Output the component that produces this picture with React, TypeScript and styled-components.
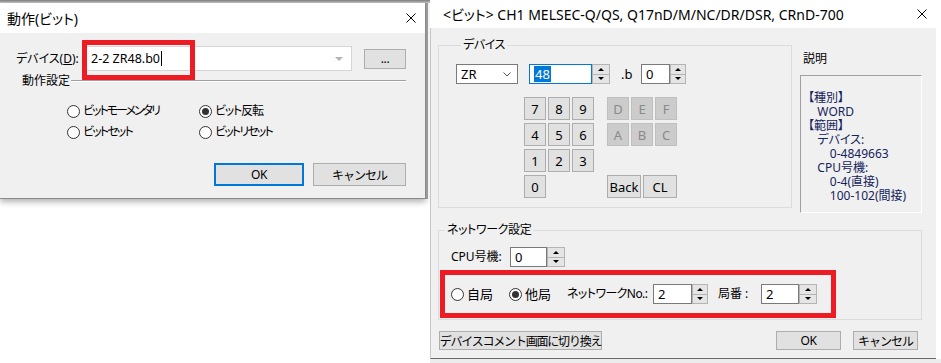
import React from 'react';
import styled, { createGlobalStyle } from 'styled-components';

const GlobalStyle = createGlobalStyle`
  html, body {
    margin: 0;
    padding: 0;
    background: #ffffff;
  }
  body {
    font-family: "Noto Sans", "Noto Sans CJK JP", "Liberation Sans", sans-serif;
    font-size: 12px;
    color: #000;
    font-feature-settings: "palt";
  }
  * {
    box-sizing: border-box;
  }
`;

const Screen = styled.div`
  display: flex;
  width: 941px;
  height: 363px;
  overflow: hidden;
  background: #ffffff;
`;

/* ---------- shared parts ---------- */

const CloseIcon = () => (
  <svg width="10" height="10" viewBox="0 0 10 10">
    <path d="M0.5 0.5L9.5 9.5M9.5 0.5L0.5 9.5" stroke="#000" strokeWidth="1" fill="none" />
  </svg>
);

const TitleBar = styled.div<{ $h: number; $pl: number; $pr: number; $size: number }>`
  height: ${p => p.$h}px;
  background: #ffffff;
  display: flex;
  align-items: center;
  justify-content: space-between;
  padding: 0 ${p => p.$pr}px 0 ${p => p.$pl}px;
  font-size: ${p => p.$size}px;
  white-space: nowrap;
`;

const Text = styled.span<{ $w?: number; $ls?: number; $size?: number }>`
  font-size: ${p => p.$size || 12}px;
  line-height: 14px;
  white-space: nowrap;
  letter-spacing: ${p => p.$ls || 0}px;
  ${p => (p.$w ? `width: ${p.$w}px; flex: none;` : '')}
`;

const PushButton = styled.button<{ $w: number; $h: number; $default?: boolean; $off?: boolean; $ls?: number; $size?: number }>`
  width: ${p => p.$w}px;
  height: ${p => p.$h}px;
  padding: 0;
  margin: 0;
  flex: none;
  font-family: inherit;
  font-size: ${p => p.$size || 12}px;
  letter-spacing: ${p => (p.$ls === undefined ? -0.4 : p.$ls)}px;
  white-space: nowrap;
  color: ${p => (p.$off ? '#8a8a8a' : '#000')};
  background: ${p => (p.$off ? '#cccccc' : '#e1e1e1')};
  border: ${p => (p.$default ? '2px solid #0078d7' : `1px solid ${p.$off ? '#bfbfbf' : '#adadad'}`)};
  display: flex;
  align-items: center;
  justify-content: center;
`;

const RadioItem = styled.div<{ $w?: number }>`
  display: flex;
  align-items: center;
  gap: 3px;
  height: 20px;
  ${p => (p.$w ? `width: ${p.$w}px; flex: none;` : '')}
`;

const RadioCircle = styled.span<{ $on?: boolean }>`
  width: 13px;
  height: 13px;
  border-radius: 50%;
  border: 1px solid #333;
  background: #fff;
  display: flex;
  align-items: center;
  justify-content: center;
  flex: none;
  &::after {
    content: '';
    width: 7px;
    height: 7px;
    border-radius: 50%;
    background: #333;
    display: ${p => (p.$on ? 'block' : 'none')};
  }
`;

const Radio = ({ label, on, w, size, ls }: { label: string; on?: boolean; w?: number; size?: number; ls?: number }) => (
  <RadioItem $w={w}>
    <RadioCircle $on={on} />
    <Text $size={size} $ls={ls}>{label}</Text>
  </RadioItem>
);

const SpinWrap = styled.div`
  display: flex;
  height: 20px;
  flex: none;
`;

const SpinField = styled.div<{ $w: number; $focus?: boolean }>`
  width: ${p => p.$w}px;
  height: 20px;
  background: #fff;
  border: 1px solid ${p => (p.$focus ? '#0078d7' : '#7a7a7a')};
  display: flex;
  align-items: center;
  padding-left: 4px;
  font-size: 13px;
`;

const Selected = styled.span`
  background: #0078d7;
  color: #fff;
  line-height: 16px;
  padding: 0 1px;
`;

const SpinButtons = styled.div<{ $w: number }>`
  width: ${p => p.$w}px;
  display: flex;
  flex-direction: column;
`;

const SpinArrow = styled.div<{ $down?: boolean }>`
  flex: 1;
  background: #e5e5e5;
  border: 1px solid #b4b4b4;
  ${p => (p.$down ? 'border-top: none;' : '')}
  display: flex;
  align-items: center;
  justify-content: center;
  &::after {
    content: '';
    width: 0;
    height: 0;
    border-left: 3px solid transparent;
    border-right: 3px solid transparent;
    ${p => (p.$down ? 'border-top: 3px solid #000;' : 'border-bottom: 3px solid #000;')}
  }
`;

const Spin = ({ value, w, bw, focus }: { value: string; w: number; bw: number; focus?: boolean }) => (
  <SpinWrap>
    <SpinField $w={w} $focus={focus}>
      {focus ? <Selected>{value}</Selected> : value}
    </SpinField>
    <SpinButtons $w={bw}>
      <SpinArrow />
      <SpinArrow $down />
    </SpinButtons>
  </SpinWrap>
);

const Highlight = styled.div`
  border: 5px solid #ed1c24;
`;

/* ---------- left dialog ---------- */

const LeftArea = styled.div`
  width: 430px;
  flex: none;
  display: flex;
  flex-direction: column;
`;

const TopShade = styled.div`
  height: 3px;
  background: linear-gradient(#7c7c7c, #c8c8c8);
`;

const LeftRow = styled.div`
  display: flex;
  align-items: flex-start;
`;

const SmallDialog = styled.div`
  width: 426px;
  flex: none;
  border-right: 1px solid #8a8a8a;
  border-bottom: 1px solid #8a8a8a;
  box-shadow: 0 3px 6px rgba(0, 0, 0, 0.3);
  display: flex;
  flex-direction: column;
`;

const BehindEdge = styled.div`
  width: 4px;
  height: 196px;
  background: #f4f4f4;
  border-left: 2px solid #9a9a9a;
`;

const SmallBody = styled.div`
  height: 165px;
  background: #f0f0f0;
  display: flex;
  flex-direction: column;
`;

const DeviceRow = styled.div`
  display: flex;
  align-items: center;
  height: 25px;
  margin-top: 13px;
  padding-left: 16px;
`;

const Combo = styled.div`
  position: relative;
  width: 266px;
  height: 25px;
  background: #fff;
  border: 1px solid #d5d5d5;
  display: flex;
  align-items: center;
  padding: 0 8px 0 4px;
  font-size: 12.5px;
  margin-right: 12px;
`;

const Caret = styled.span`
  width: 1px;
  height: 15px;
  background: #000;
  margin-left: 1px;
`;

const DropTriangle = styled.span`
  margin-left: auto;
  width: 0;
  height: 0;
  border-left: 4px solid transparent;
  border-right: 4px solid transparent;
  border-top: 4px solid #b4b4b4;
`;

const ComboMark = styled(Highlight)`
  position: absolute;
  left: -5px;
  top: -7px;
  width: 113px;
  height: 40px;
`;

const Underline = styled.span`
  text-decoration: underline;
`;

const SectionHead = styled.div`
  display: flex;
  align-items: center;
  height: 14px;
  margin-top: 3px;
  padding: 0 19px 0 22px;
`;

const EtchedLine = styled.div`
  flex: 1;
  height: 2px;
  border-top: 1px solid #a0a0a0;
  border-bottom: 1px solid #ffffff;
  margin-left: 1px;
`;

const RadioGrid = styled.div`
  display: grid;
  grid-template-columns: 132px auto;
  grid-auto-rows: 20px;
  row-gap: 1px;
  margin-top: 13px;
  padding-left: 67px;
`;

const DialogButtons = styled.div`
  display: flex;
  justify-content: flex-end;
  gap: 9px;
  padding-right: 19px;
  margin-top: 21px;
`;

/* ---------- right dialog ---------- */

const RightArea = styled.div`
  width: 511px;
  flex: none;
  display: flex;
  flex-direction: column;
  background: #fff;
`;

const BigBody = styled.div`
  width: 506px;
  height: 331px;
  background: #f0f0f0;
  border-left: 1px solid #c6c6c6;
  border-bottom: 1px solid #6a6a6a;
  padding: 10px 14px 0 7px;
  display: flex;
  flex-direction: column;
`;

const BottomStrip = styled.div`
  height: 4px;
  background: #ececec;
`;

const TopRow = styled.div`
  display: flex;
  align-items: flex-start;
  gap: 8px;
`;

const Group = styled.fieldset<{ $w: number; $pad: string }>`
  width: ${p => p.$w}px;
  margin: 0;
  padding: ${p => p.$pad};
  border: 1px solid #dcdcdc;
  min-width: 0;
  flex: none;
`;

const GroupTitle = styled.legend`
  margin-left: 5px;
  padding: 0 2px;
  font-size: 12px;
  line-height: 14px;
  letter-spacing: -0.4px;
`;

const FieldRow = styled.div<{ $pl?: number }>`
  display: flex;
  align-items: center;
  height: 20px;
  padding-left: ${p => p.$pl || 0}px;
`;

const Select = styled.div`
  width: 62px;
  height: 20px;
  background: #fff;
  border: 1px solid #7a7a7a;
  display: flex;
  align-items: center;
  justify-content: space-between;
  padding: 0 6px 0 4px;
  font-size: 13px;
  margin-right: 11px;
`;

const Keypad = styled.div`
  display: grid;
  grid-template-columns: 22px 22px 22px 9px 22px 22px 22px;
  grid-auto-rows: 23px;
  gap: 3px 2px;
  margin: 13px 0 0 68px;
`;

const KeyPair = styled.div`
  grid-column: 5 / span 3;
  display: flex;
  gap: 2px;
`;

const InfoColumn = styled.div`
  width: 122px;
  flex: none;
  padding-top: 12px;
`;

const InfoBox = styled.div`
  margin-top: 8px;
  height: 138px;
  border-top: 1px solid #a0a0a0;
  border-left: 1px solid #a0a0a0;
  border-right: 1px solid #ffffff;
  border-bottom: 1px solid #ffffff;
  padding: 15px 0 0 7px;
  color: #14235c;
`;

const InfoText = styled.div`
  font-size: 12px;
  line-height: 14px;
  white-space: pre;
`;

const NetMark = styled(Highlight)`
  width: 396px;
  margin-top: 3px;
  padding: 9px 0 9px 6px;
`;

const BottomButtons = styled.div`
  display: flex;
  align-items: center;
  margin-top: 11px;
  padding: 0 4px 0 1px;
  gap: 12px;
`;

const Spacer = styled.div`
  flex: 1;
`;

const digitKeys = [
  ['7', '8', '9', 'D', 'E', 'F'],
  ['4', '5', '6', 'A', 'B', 'C'],
  ['1', '2', '3'],
];

const infoText = [
  '【種別】',
  '   WORD',
  '【範囲】',
  '   デバイス:',
  '       0-4849663',
  '   CPU号機:',
  '       0-4(直接)',
  '       100-102(間接)',
].join('\n');

const App = () => {
  return (
    <>
      <GlobalStyle />
      <Screen>
        <LeftArea>
          <TopShade />
          <LeftRow>
            <SmallDialog>
              <TitleBar $h={30} $pl={7} $pr={9} $size={14}>
                <span>動作(ビット)</span>
                <CloseIcon />
              </TitleBar>
              <SmallBody>
                <DeviceRow>
                  <Text $w={70}>
                    デバイス(<Underline>D</Underline>):
                  </Text>
                  <Combo>
                    2-2 ZR48.b0
                    <Caret />
                    <DropTriangle />
                    <ComboMark />
                  </Combo>
                  <PushButton $w={42} $h={20}>...</PushButton>
                </DeviceRow>
                <SectionHead>
                  <Text>動作設定</Text>
                  <EtchedLine />
                </SectionHead>
                <RadioGrid>
                  <Radio label="ビットモーメンタリ" ls={-2} />
                  <Radio label="ビット反転" on ls={-1.2} />
                  <Radio label="ビットセット" ls={-1.8} />
                  <Radio label="ビットリセット" ls={-1.8} />
                </RadioGrid>
                <DialogButtons>
                  <PushButton $w={90} $h={23} $default>OK</PushButton>
                  <PushButton $w={93} $h={23} $ls={-1}>キャンセル</PushButton>
                </DialogButtons>
              </SmallBody>
            </SmallDialog>
            <BehindEdge />
          </LeftRow>
        </LeftArea>

        <RightArea>
          <TitleBar $h={28} $pl={13} $pr={14} $size={14}>
            <span>&lt;ビット&gt; CH1 MELSEC-Q/QS, Q17nD/M/NC/DR/DSR, CRnD-700</span>
            <CloseIcon />
          </TitleBar>
          <BigBody>
            <TopRow>
              <Group $w={354} $pad="12px 0 9px 17px">
                <GroupTitle>デバイス</GroupTitle>
                <FieldRow>
                  <Select>
                    ZR
                    <svg width="8" height="5" viewBox="0 0 8 5">
                      <polyline points="0.5,0.5 4,4 7.5,0.5" fill="none" stroke="#555" strokeWidth="1" />
                    </svg>
                  </Select>
                  <Spin value="48" w={63} bw={18} focus />
                  <Text $w={20} $size={13} style={{ marginLeft: 11 }}>.b</Text>
                  <Spin value="0" w={29} bw={16} />
                </FieldRow>
                <Keypad>
                  {digitKeys.map(row =>
                    row.map((k, i) => (
                      <PushButton
                        key={k}
                        $w={22}
                        $h={23}
                        $ls={0}
                        $size={13}
                        $off={i > 2}
                        style={{ gridColumn: i > 2 ? i + 2 : i + 1 }}
                      >
                        {k}
                      </PushButton>
                    ))
                  )}
                  <PushButton $w={22} $h={23} $ls={0} $size={13} style={{ gridColumn: 1 }}>0</PushButton>
                  <KeyPair>
                    <PushButton $w={34} $h={23} $ls={0} $size={13}>Back</PushButton>
                    <PushButton $w={34} $h={23} $ls={0} $size={13}>CL</PushButton>
                  </KeyPair>
                </Keypad>
              </Group>
              <InfoColumn>
                <Text style={{ paddingLeft: 3 }}>説明</Text>
                <InfoBox>
                  <InfoText>{infoText}</InfoText>
                </InfoBox>
              </InfoColumn>
            </TopRow>

            <Group $w={484} $pad="10px 0 1px 1px" style={{ marginTop: 10 }}>
              <GroupTitle>ネットワーク設定</GroupTitle>
              <FieldRow $pl={11}>
                <Text $w={59}>CPU号機:</Text>
                <Spin value="0" w={37} bw={18} />
              </FieldRow>
              <NetMark>
                <FieldRow>
                  <Radio label="自局" w={58} size={13} />
                  <Radio label="他局" on w={58} size={13} />
                  <Text $w={86} $ls={-0.6}>ネットワークNo.:</Text>
                  <Spin value="2" w={39} bw={16} />
                  <Text $w={43} style={{ marginLeft: 10 }}>局番 :</Text>
                  <Spin value="2" w={38} bw={18} />
                </FieldRow>
              </NetMark>
            </Group>

            <BottomButtons>
              <PushButton $w={163} $h={19} $ls={-1.2}>デバイスコメント画面に切り換え</PushButton>
              <Spacer />
              <PushButton $w={65} $h={19}>OK</PushButton>
              <PushButton $w={65} $h={19} $ls={-1}>キャンセル</PushButton>
            </BottomButtons>
          </BigBody>
          <BottomStrip />
        </RightArea>
      </Screen>
    </>
  );
};

export default App;
